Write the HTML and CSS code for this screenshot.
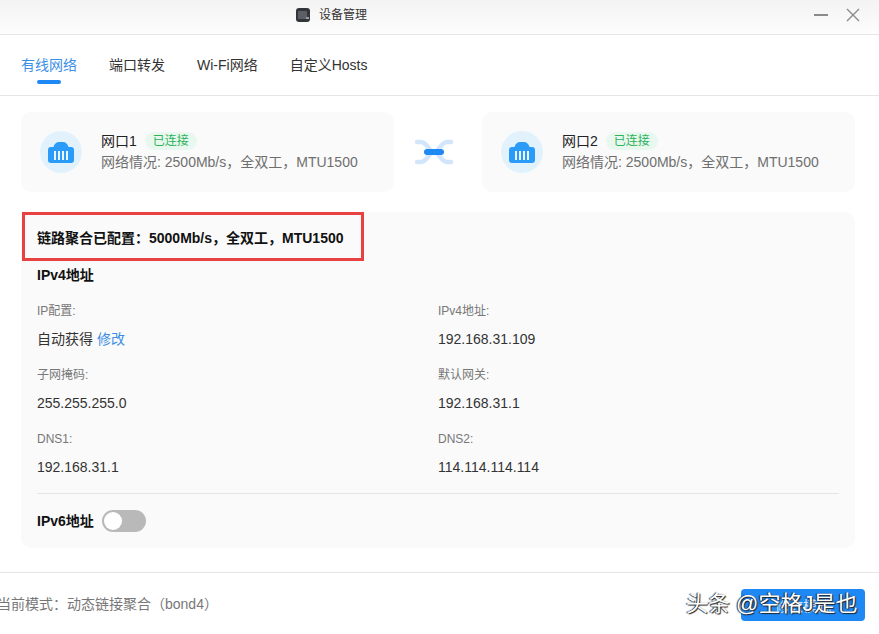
FILE: index.html
```html
<!DOCTYPE html>
<html lang="zh">
<head>
<meta charset="utf-8">
<title>设备管理</title>
<link rel="stylesheet" href="styles.css">
</head>
<body>
<div class="window">
  <header class="titlebar">
    <div class="title">
      <svg class="app-icon" width="14" height="14" viewBox="0 0 14 14"><rect width="14" height="14" rx="3" fill="#33353a"/><rect x="2" y="3" width="9" height="8" rx="1" fill="#5c5f66"/><rect x="10" y="9" width="3" height="2" fill="#9a9da3"/></svg>
      <span>设备管理</span>
    </div>
    <div class="win-controls">
      <svg width="16" height="16" viewBox="0 0 16 16"><path d="M1 8h14" stroke="#8a8a8a" stroke-width="2"/></svg>
      <svg width="14" height="14" viewBox="0 0 14 14"><path d="M1 1l12 12M13 1L1 13" stroke="#8a8a8a" stroke-width="1.4" fill="none"/></svg>
    </div>
  </header>

  <nav class="tabs">
    <a class="tab active">有线网络</a>
    <a class="tab">端口转发</a>
    <a class="tab">Wi-Fi网络</a>
    <a class="tab">自定义Hosts</a>
  </nav>

  <main class="content">
    <section class="ports">
      <div class="port">
        <div class="port-icon">
          <svg width="26" height="21" viewBox="0 0 26 21"><path d="M3 5h2.500C6 2 8.500 0 11 0h4c2.500 0 5 2 5.500 5H23a3 3 0 0 1 3 3v10a3 3 0 0 1-3 3H3a3 3 0 0 1-3-3V8a3 3 0 0 1 3-3z" fill="#2a9bf8"/><path d="M7 9v9M11 9v9M15 9v9M19 9v9" stroke="#fff" stroke-width="1.800"/></svg>
        </div>
        <div class="port-text">
          <div class="port-name">网口1 <span class="badge">已连接</span></div>
          <div class="port-info">网络情况: 2500Mb/s，全双工，MTU1500</div>
        </div>
      </div>
      <div class="link-icon">
        <svg width="40" height="26" viewBox="0 0 40 26"><path d="M3 3h4c6 0 8 10 13 10s7-10 13-10h4M3 23h4c6 0 8-10 13-10s7 10 13 10h4" stroke="#d3e5fb" stroke-width="4.500" stroke-linecap="round" fill="none"/><path d="M13 13h14" stroke="#1e88f5" stroke-width="6" stroke-linecap="round"/></svg>
      </div>
      <div class="port">
        <div class="port-icon">
          <svg width="26" height="21" viewBox="0 0 26 21"><path d="M3 5h2.500C6 2 8.500 0 11 0h4c2.500 0 5 2 5.500 5H23a3 3 0 0 1 3 3v10a3 3 0 0 1-3 3H3a3 3 0 0 1-3-3V8a3 3 0 0 1 3-3z" fill="#2a9bf8"/><path d="M7 9v9M11 9v9M15 9v9M19 9v9" stroke="#fff" stroke-width="1.800"/></svg>
        </div>
        <div class="port-text">
          <div class="port-name">网口2 <span class="badge">已连接</span></div>
          <div class="port-info">网络情况: 2500Mb/s，全双工，MTU1500</div>
        </div>
      </div>
    </section>

    <section class="panel">
      <div class="highlight"></div>
      <h2 class="bond">链路聚合已配置：5000Mb/s，全双工，MTU1500</h2>
      <h3 class="section-title">IPv4地址</h3>
      <div class="grid">
        <div class="field"><div class="label">IP配置:</div><div class="value">自动获得 <a class="link">修改</a></div></div>
        <div class="field"><div class="label">IPv4地址:</div><div class="value">192.168.31.109</div></div>
        <div class="field"><div class="label">子网掩码:</div><div class="value">255.255.255.0</div></div>
        <div class="field"><div class="label">默认网关:</div><div class="value">192.168.31.1</div></div>
        <div class="field"><div class="label">DNS1:</div><div class="value">192.168.31.1</div></div>
        <div class="field"><div class="label">DNS2:</div><div class="value">114.114.114.114</div></div>
      </div>
      <div class="ipv6">
        <span class="section-title inline">IPv6地址</span>
        <span class="switch"><span class="knob"></span></span>
      </div>
    </section>
  </main>

  <footer class="footer">
    <span class="mode">当前模式：动态链接聚合（bond4）</span>
    <button class="btn">修改模式</button>
    <span class="watermark">头条 @空格J是也</span>
  </footer>
</div>
</body>
</html>
```
FILE: styles.css
```css
* { box-sizing: border-box; }
html, body { margin: 0; padding: 0; }
body {
  width: 879px;
  height: 634px;
  overflow: hidden;
  background: #fff;
  font-family: "Liberation Sans", "Noto Sans CJK SC", sans-serif;
  color: #1f1f1f;
}
.window { position: relative; width: 879px; height: 634px; overflow: hidden; }

.titlebar {
  height: 35px;
  display: flex;
  align-items: center;
  justify-content: flex-end;
  position: relative;
  padding: 0 19px 4px 0;
  background: linear-gradient(#f3f3f3, #fdfdfd);
  border-bottom: 1px solid #e6e6e6;
}
.title {
  position: absolute;
  left: 296px;
  top: 8px;
  display: flex;
  align-items: center;
  gap: 9px;
  font-size: 12px;
  line-height: 14px;
  color: #333;
}
.win-controls { display: flex; align-items: center; gap: 17px; }
.win-controls svg { display: block; }

.tabs {
  height: 61px;
  display: flex;
  padding-left: 21px;
  gap: 32px;
  border-bottom: 1px solid #e6e6e6;
}
.tab {
  position: relative;
  font-size: 14px;
  line-height: 60px;
  color: #333;
}
.tab.active { color: #3c8fe6; }
.tab.active::after {
  content: "";
  position: absolute;
  left: 16px;
  right: 16px;
  bottom: 11px;
  height: 4px;
  border-radius: 2px;
  background: #1e88f5;
}

.content { padding: 16px 24px 0 21px; }
.ports { display: flex; align-items: center; }
.port {
  width: 373px;
  height: 80px;
  display: flex;
  align-items: center;
  padding-left: 19px;
  gap: 19px;
  background: #fafafa;
  border-radius: 10px;
}
.port-icon {
  width: 42px;
  height: 42px;
  border-radius: 50%;
  background: #e2f2fd;
  display: flex;
  align-items: center;
  justify-content: center;
}
.port-icon svg { display: block; }
.port-text { margin-top: -1px; }
.port-name { display: flex; align-items: center; gap: 8px; font-size: 14px; line-height: 20px; color: #222; }
.badge {
  padding: 0 8px;
  height: 18px;
  line-height: 18px;
  border-radius: 9px;
  font-size: 12px;
  color: #2bb35a;
  background: #e9f8ee;
}
.port-info { margin-top: 1px; font-size: 14px; line-height: 21px; color: #6f6f6f; }
.link-icon { width: 88px; padding-right: 8px; display: flex; justify-content: center; }
.link-icon svg { display: block; }

.panel {
  position: relative;
  margin-top: 20px;
  width: 834px;
  height: 336px;
  padding: 0 16px;
  background: #fafafa;
  border-radius: 10px;
}
.highlight {
  position: absolute;
  left: 1px;
  top: 0;
  width: 342px;
  height: 49px;
  border: 3px solid #e84142;
}
.bond { margin: 0; padding-top: 17px; font-size: 14px; line-height: 19px; font-weight: 700; color: #111; }
.section-title { margin: 0; font-size: 14px; font-weight: 700; color: #111; line-height: 18px; }
h3.section-title { margin-top: 18px; }
.grid {
  display: grid;
  grid-template-columns: 401px 1fr;
  row-gap: 18px;
  margin-top: 19px;
  padding-bottom: 16px;
  border-bottom: 1px solid #e6e6e6;
}
.label { font-size: 12px; line-height: 16px; color: #777; }
.value { margin-top: 10px; font-size: 14px; line-height: 20px; color: #333; }
.link { color: #3c8fe6; }
.ipv6 { display: flex; align-items: center; gap: 8px; margin-top: 16px; }
.inline { display: block; }
.switch {
  width: 44px;
  height: 22px;
  border-radius: 11px;
  background: #b9b9b9;
  padding: 2px;
}
.knob { display: block; width: 18px; height: 18px; border-radius: 50%; background: #fff; }

.footer {
  position: absolute;
  left: 0;
  right: 0;
  top: 572px;
  height: 62px;
  border-top: 1px solid #e6e6e6;
  display: flex;
  align-items: flex-start;
  justify-content: space-between;
  padding: 16px 14px 0 0;
}
.mode { margin-left: -3px; margin-top: 5px; font-size: 14px; line-height: 20px; color: #777; }
.btn {
  width: 124px;
  height: 32px;
  border: 0;
  border-radius: 4px;
  background: #1e88f5;
  color: #d5e9fd;
  font: 14px "Liberation Sans", "Noto Sans CJK SC", sans-serif;
}
.watermark {
  position: absolute;
  left: 686px;
  top: 17px;
  font-size: 22px;
  line-height: 28px;
  color: #fff;
  white-space: nowrap;
  text-shadow: 1px 1px 1px #222, -1px 0 1px #222;
}
```
